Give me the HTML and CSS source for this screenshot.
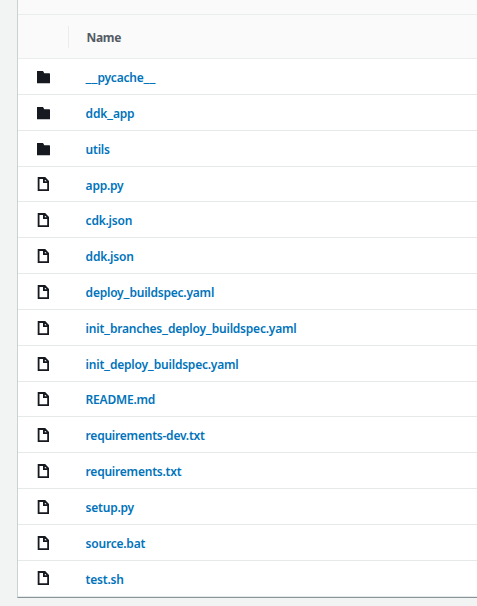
FILE: index.html
```html
<!DOCTYPE html>
<html lang="en">
<head>
<meta charset="utf-8">
<title>Files</title>
<link rel="stylesheet" href="styles.css">
</head>
<body>
<svg width="0" height="0" class="defs">
  <symbol id="folder" viewBox="0 0 14 14"><path d="M0 1H6L7.3 3.2H12.4L13 3.8V13.3H0Z" fill="#16191f"/></symbol>
  <symbol id="file" viewBox="0 0 14 16"><path d="M1.6 2H7.8L11.1 5.4V14.2H1.6ZM6.9 2V6.2H11.1" fill="none" stroke="#16191f" stroke-width="1.8"/></symbol>
</svg>
<main class="panel">
  <div class="toolbar"></div>
  <div class="head"><span class="select"></span><span class="title">Name</span></div>
  <ul class="files">
    <li><svg class="folder"><use href="#folder"/></svg><a><i>__</i>pycache<i>__</i></a></li>
    <li><svg class="folder"><use href="#folder"/></svg><a>ddk<i>_</i>app</a></li>
    <li><svg class="folder"><use href="#folder"/></svg><a>utils</a></li>
    <li class="short"><svg class="file"><use href="#file"/></svg><a>app.py</a></li>
    <li><svg class="file"><use href="#file"/></svg><a>cdk.json</a></li>
    <li><svg class="file"><use href="#file"/></svg><a>ddk.json</a></li>
    <li><svg class="file"><use href="#file"/></svg><a>deploy<i>_</i>buildspec.yaml</a></li>
    <li><svg class="file"><use href="#file"/></svg><a>init<i>_</i>branches<i>_</i>deploy<i>_</i>buildspec.yaml</a></li>
    <li><svg class="file"><use href="#file"/></svg><a>init<i>_</i>deploy<i>_</i>buildspec.yaml</a></li>
    <li class="short readme"><svg class="file"><use href="#file"/></svg><a>README.md</a></li>
    <li><svg class="file"><use href="#file"/></svg><a>requirements-dev.txt</a></li>
    <li><svg class="file"><use href="#file"/></svg><a>requirements.txt</a></li>
    <li><svg class="file"><use href="#file"/></svg><a>setup.py</a></li>
    <li><svg class="file"><use href="#file"/></svg><a>source.bat</a></li>
    <li class="last"><svg class="file"><use href="#file"/></svg><a>test.sh</a></li>
  </ul>
</main>
</body>
</html>
```

FILE: styles.css
```css
* { box-sizing: border-box; }
body {
  margin: 0;
  height: 606px;
  overflow: hidden;
  background: #f2f3f3;
  font-family: "Noto Sans", "Open Sans", sans-serif;
  font-size: 12px;
}
.defs { display: block; }
.panel {
  margin-left: 17px;
  border-left: 1px solid #cbd2d2;
  border-bottom: 1px solid #879596;
  background: #fff;
}
.toolbar {
  height: 15px;
  background: #fafafa;
  border-bottom: 1px solid #eaeded;
}
.head {
  display: flex;
  align-items: center;
  height: 44px;
  background: #fafafa;
  border-bottom: 1px solid #eaeded;
}
.select {
  width: 51px;
  height: 22px;
  border-right: 1px solid #eaeded;
}
.title {
  margin-left: 17.5px;
  padding-top: 2px;
  color: #545b64;
  font-weight: 700;
  letter-spacing: -0.3px;
}
.files {
  margin: 0;
  padding: 0;
  list-style: none;
}
.files li {
  display: flex;
  align-items: flex-start;
  height: 36px;
  padding: 10px 0 0 19px;
  border-bottom: 1px solid #e6e9e9;
}
.files li.short { height: 35px; }
.files .short,
.files .last { padding-top: 9px; }
.files svg {
  flex: none;
  width: 14px;
  margin-right: 34.6px;
}
.folder { height: 14px; margin-top: 1px; }
.file { height: 16px; }
.files a {
  color: #0073bb;
  font-weight: 600;
  letter-spacing: -0.22px;
  line-height: 18px;
}
.short a,
.last a { padding-top: 1px; }
.readme a { padding-top: 0; }
.files i {
  font-size: 14px;
  font-style: normal;
  line-height: 0;
  letter-spacing: 0;
}
```
